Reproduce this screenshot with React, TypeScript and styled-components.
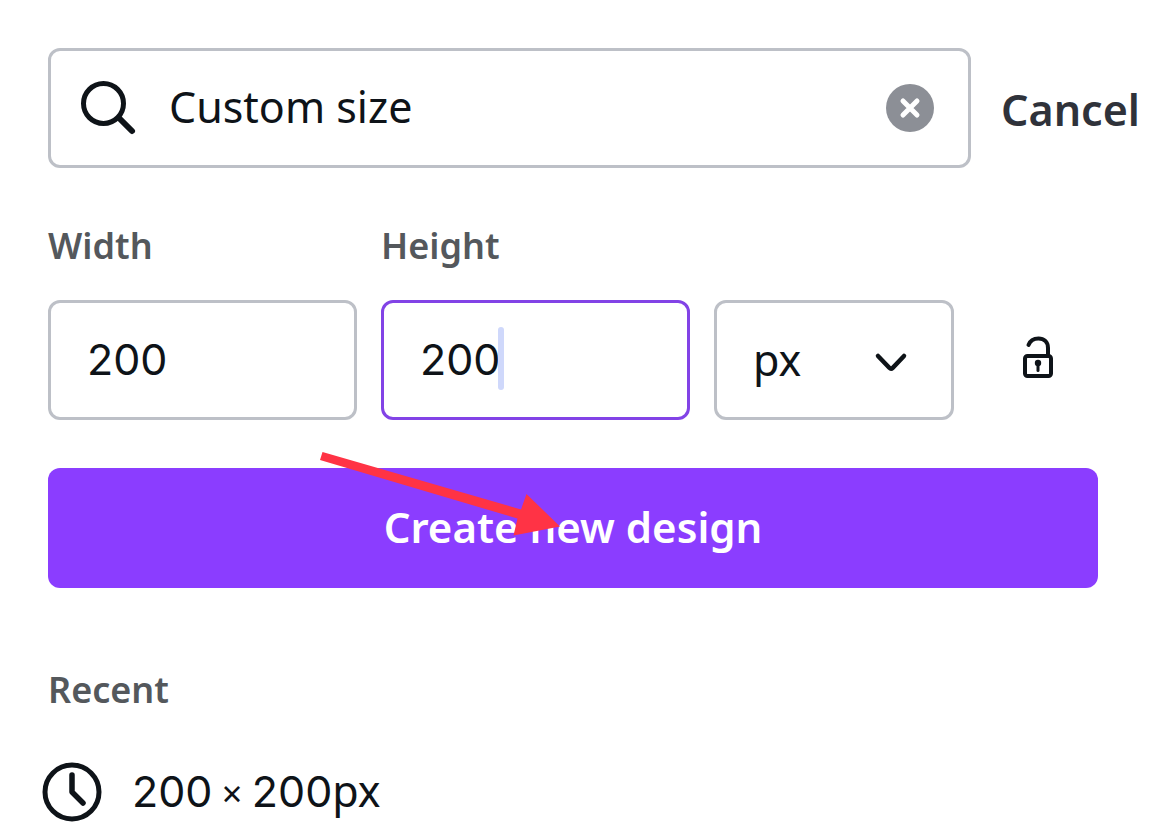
import React, { useState } from 'react';
import styled, { createGlobalStyle } from 'styled-components';

const numeralFont = "Inter, 'Noto Sans', sans-serif";

const GlobalStyle = createGlobalStyle`
  *, *::before, *::after { box-sizing: border-box; }
  body {
    margin: 0;
    background: #fff;
    color: #0e1318;
    font-family: 'Noto Sans', 'Open Sans', sans-serif;
  }
  button, input, select { font: inherit; color: inherit; }
`;

const Page = styled.main`
  padding: 48px 30px 0 48px;
`;

const SearchRow = styled.form`
  display: flex;
  align-items: center;
  gap: 30px;
`;

const SearchBox = styled.label`
  flex: 1;
  min-width: 0;
  height: 120px;
  display: flex;
  align-items: center;
  padding: 0 34px 0 30px;
  border: 3px solid #bdc0c7;
  border-radius: 12px;
`;

const SearchInput = styled.input`
  flex: 1;
  min-width: 0;
  height: 64px;
  margin: 0 24px 0 32px;
  padding: 0 0 4px;
  border: 0;
  outline: 0;
  background: transparent;
  font-size: 43px;
`;

const IconButton = styled.button`
  display: flex;
  align-items: center;
  justify-content: center;
  padding: 0;
  border: 0;
  background: none;
`;

const CancelButton = styled.button`
  padding: 4px 0 0;
  border: 0;
  background: none;
  color: #2f323a;
  font-size: 43px;
  line-height: 60px;
  font-weight: 600;
`;

const Content = styled.div`
  margin-right: 42px;
`;

const SizeGrid = styled.div`
  display: grid;
  grid-template-columns: 309fr 309fr 240fr 120fr;
  column-gap: 24px;
  align-items: end;
  margin-top: 48px;
`;

const Field = styled.div`
  min-width: 0;
`;

const Caption = styled.label`
  display: block;
  padding-bottom: 24px;
  color: #54585c;
  font-size: 36px;
  line-height: 60px;
  font-weight: 600;
`;

const InputWrap = styled.div`
  position: relative;
`;

const SizeInput = styled.input<{ $active?: boolean }>`
  display: block;
  width: 100%;
  height: 120px;
  padding: 0 36px 2px;
  border: 3px solid ${(p) => (p.$active ? '#8243e6' : '#bdc0c7')};
  border-radius: 12px;
  outline: 0;
  background: #fff;
  font-family: ${numeralFont};
  font-size: 43px;
`;

const Caret = styled.span`
  position: absolute;
  left: 117px;
  top: 27px;
  width: 6px;
  height: 63px;
  border-radius: 3px;
  background: #cfd8fb;
`;

const UnitSelect = styled.select`
  display: block;
  width: 100%;
  height: 120px;
  padding: 0 36px 2px;
  border: 3px solid #bdc0c7;
  border-radius: 12px;
  outline: 0;
  appearance: none;
  background: #fff;
  font-size: 43px;
`;

const Chevron = styled.svg`
  position: absolute;
  right: 46px;
  top: 52px;
  pointer-events: none;
`;

const LockCell = styled.div`
  height: 120px;
  display: flex;
  align-items: center;
  justify-content: center;
  padding-bottom: 6px;
`;

const CreateWrap = styled.div`
  position: relative;
  margin-top: 48px;
`;

const CreateButton = styled.button`
  display: block;
  width: 100%;
  height: 120px;
  padding: 0 0 4px;
  border: 0;
  border-radius: 12px;
  background: #8b3dff;
  color: #fff;
  font-size: 42px;
  font-weight: 600;
`;

const Arrow = styled.svg`
  position: absolute;
  left: calc(50% - 253px);
  top: -18px;
  pointer-events: none;
`;

const Recent = styled.section`
  padding-top: 72px;
`;

const RecentTitle = styled.h2`
  margin: 0;
  color: #54585c;
  font-size: 36px;
  line-height: 60px;
  font-weight: 600;
`;

const RecentItem = styled.button`
  display: flex;
  align-items: center;
  gap: 24px;
  margin: 36px 0 0 -12px;
  padding: 0;
  border: 0;
  background: none;
  font-size: 43px;
  line-height: 64px;
`;

const Numeral = styled.span`
  font-family: ${numeralFont};
`;

const Times = styled.span`
  font-size: 36px;
`;

export default function App() {
  const [query, setQuery] = useState('Custom size');
  const [width, setWidth] = useState('200');
  const [height, setHeight] = useState('200');

  return (
    <>
      <GlobalStyle />
      <Page>
        <SearchRow onSubmit={(e) => e.preventDefault()}>
          <SearchBox>
            <svg width="56" height="56" viewBox="0 0 56 56" fill="none" stroke="#0e1318" aria-hidden="true">
              <circle cx="22.500" cy="23.500" r="20" strokeWidth="5" />
              <path d="M38 38 51 51" strokeWidth="6" strokeLinecap="round" />
            </svg>
            <SearchInput aria-label="Search" value={query} onChange={(e) => setQuery(e.target.value)} />
            <IconButton type="button" aria-label="Clear search" onClick={() => setQuery('')}>
              <svg width="48" height="48" viewBox="0 0 48 48" aria-hidden="true">
                <circle cx="24" cy="24" r="24" fill="#8c8f96" />
                <path d="M17 17 31 31M31 17 17 31" stroke="#fff" strokeWidth="5" strokeLinecap="round" />
              </svg>
            </IconButton>
          </SearchBox>
          <CancelButton type="button">Cancel</CancelButton>
        </SearchRow>

        <Content>
          <SizeGrid>
            <Field>
              <Caption htmlFor="width">Width</Caption>
              <SizeInput id="width" inputMode="numeric" value={width} onChange={(e) => setWidth(e.target.value)} />
            </Field>
            <Field>
              <Caption htmlFor="height">Height</Caption>
              <InputWrap>
                <SizeInput
                  id="height"
                  $active
                  inputMode="numeric"
                  value={height}
                  onChange={(e) => setHeight(e.target.value)}
                />
                <Caret />
              </InputWrap>
            </Field>
            <InputWrap>
              <UnitSelect aria-label="Unit" defaultValue="px">
                <option>px</option>
                <option>in</option>
                <option>mm</option>
                <option>cm</option>
              </UnitSelect>
              <Chevron width="34" height="22" viewBox="0 0 34 22" fill="none" aria-hidden="true">
                <path
                  d="M4 4 15.300 15.800Q17 17.500 18.700 15.800L30 4"
                  stroke="#0e1318"
                  strokeWidth="4.500"
                  strokeLinecap="round"
                />
              </Chevron>
            </InputWrap>
            <LockCell>
              <IconButton type="button" aria-label="Lock aspect ratio">
                <svg width="32" height="44" viewBox="0 0 32 44" fill="none" stroke="#0e1318" aria-hidden="true">
                  <rect x="3" y="21" width="26" height="20" rx="2.500" strokeWidth="4" />
                  <path d="M26 21V13C26 7 22 3.500 16.500 3.500C12 3.500 8 6 6.500 10" strokeWidth="4" strokeLinecap="round" />
                  <circle cx="16" cy="28" r="3.200" fill="#0e1318" stroke="none" />
                  <path d="M16 28V35.500" strokeWidth="3" strokeLinecap="round" />
                </svg>
              </IconButton>
            </LockCell>
          </SizeGrid>

          <CreateWrap>
            <CreateButton type="button">Create new design</CreateButton>
            <Arrow width="244" height="90" viewBox="320 450 244 90" fill="#ff3345" aria-hidden="true">
              <path d="M322.500 452 521 509.500 526.500 494 560 526.500 513.500 535.500 517.500 518.500 320 460Z" />
            </Arrow>
          </CreateWrap>

          <Recent>
            <RecentTitle>Recent</RecentTitle>
            <RecentItem type="button">
              <svg width="72" height="72" viewBox="0 0 72 72" fill="none" stroke="#0e1318" aria-hidden="true">
                <circle cx="36" cy="36" r="27" strokeWidth="5" />
                <path d="M36 19V36L47 47" strokeWidth="5.500" strokeLinecap="round" strokeLinejoin="round" />
              </svg>
              <span>
                <Numeral>200</Numeral>
                <Times> × </Times>
                <Numeral>200</Numeral>px
              </span>
            </RecentItem>
          </Recent>
        </Content>
      </Page>
    </>
  );
}
